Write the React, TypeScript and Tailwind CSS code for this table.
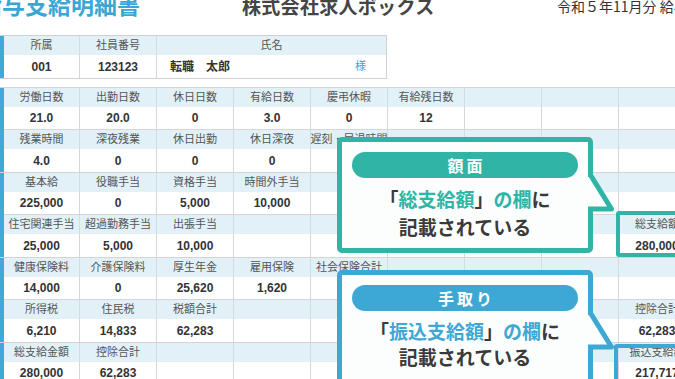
import React from "react";

const FONT = "font-['Liberation_Sans','Noto_Sans_CJK_JP',sans-serif]";

const E = ["", "", "", "", "", "", "", "", ""];

const sections: string[][][] = [
  [
    ["労働日数", "出勤日数", "休日日数", "有給日数", "慶弔休暇", "有給残日数", "", "", ""],
    ["21.0", "20.0", "0", "3.0", "0", "12", "", "", ""],
    ["残業時間", "深夜残業", "休日出勤", "休日深夜", "遅刻・早退時間", "", "", "", ""],
    ["4.0", "0", "0", "0", "", "", "", "", ""],
  ],
  [
    ["基本給", "役職手当", "資格手当", "時間外手当", "", "", "", "", ""],
    ["225,000", "0", "5,000", "10,000", "", "", "", "", ""],
    ["住宅関連手当", "超過勤務手当", "出張手当", "", "", "", "", "", "総支給額"],
    ["25,000", "5,000", "10,000", "", "", "", "", "", "280,000"],
  ],
  [
    ["健康保険料", "介護保険料", "厚生年金", "雇用保険", "社会保険合計", "", "", "", ""],
    ["14,000", "0", "25,620", "1,620", "", "", "", "", ""],
    ["所得税", "住民税", "税額合計", "", "", "", "", "", "控除合計"],
    ["6,210", "14,833", "62,283", "", "", "", "", "", "62,283"],
  ],
  [
    ["総支給金額", "控除合計", "", "", "", "", "", "", "振込支給額"],
    ["280,000", "62,283", "", "", "", "", "", "", "217,717"],
    E,
    E,
  ],
];

function Section({ rows }: { rows: string[][] }) {
  return (
    <div className="flex border-t border-[#d4d4d4]">
      <div className="w-[4px] shrink-0 bg-[#40a9d5]" />
      <div className="grid shrink-0 grid-cols-[76px_repeat(8,77px)] grid-rows-[19px_23px_19px_23px]">
        {rows.map((row, ri) =>
          row.map((txt, ci) =>
            ri % 2 === 0 ? (
              <div
                key={`${ri}-${ci}`}
                className="flex items-center justify-center whitespace-nowrap bg-[#e2f1f8] border-r border-[#d6dde0] text-[11px] leading-none text-[#555]"
              >
                {txt}
              </div>
            ) : (
              <div
                key={`${ri}-${ci}`}
                className={`flex items-center justify-center whitespace-nowrap bg-white border-r border-[#d6d6d6] text-[12px] font-bold leading-none text-[#333] ${
                  ri === 1 ? "border-b" : ""
                }`}
              >
                {txt}
              </div>
            )
          )
        )}
      </div>
    </div>
  );
}

function Tail({ color, top }: { color: string; top: number }) {
  return (
    <svg
      className="absolute"
      style={{ left: 251, top }}
      width="32"
      height="42"
      viewBox="0 0 32 42"
    >
      <polygon points="0,2 2.5,2 23.5,34 0,34" fill="#fcfefe" />
      <polyline
        points="2.5,0 23.5,34 0,34"
        fill="none"
        stroke={color}
        strokeWidth="5"
        strokeLinejoin="round"
        strokeLinecap="square"
      />
    </svg>
  );
}

export default function App() {
  return (
    <div className={`relative w-[675px] h-[379px] overflow-hidden bg-white ${FONT}`}>
      {/* header */}
      <div className="flex h-[35px] items-start whitespace-nowrap">
        <div className="ml-[-21px] w-[263px] shrink-0 mt-[-7px] text-[23px] leading-[23px] font-bold text-[#3aa6d3] font-['Noto_Sans_CJK_JP',sans-serif]">
          給与支給明細書
        </div>
        <div className="w-[315px] shrink-0 mt-[-4px] text-[19px] leading-[19px] font-bold tracking-[0.3px] text-[#444] font-['Noto_Sans_CJK_JP',sans-serif]">
          株式会社求人ボックス
        </div>
        <div className="shrink-0 mt-[-1px] text-[14px] leading-[14px] text-[#333] font-['Noto_Sans_CJK_JP',sans-serif]">
          令和５年11月分 給与支給明細書
        </div>
      </div>

      {/* info table */}
      <div className="flex w-[387px] border-y border-r border-[#d0d0d0]">
        <div className="w-[4px] shrink-0 bg-[#40a9d5]" />
        <div className="grid grid-cols-[76px_77px_229px] grid-rows-[19px_23px]">
          <div className="flex items-center justify-center bg-[#e2f1f8] border-r border-[#d6dde0] text-[11px] text-[#555]">所属</div>
          <div className="flex items-center justify-center bg-[#e2f1f8] border-r border-[#d6dde0] text-[11px] text-[#555]">社員番号</div>
          <div className="flex items-center justify-center bg-[#e2f1f8] text-[11px] text-[#555]">氏名</div>
          <div className="flex items-center justify-center border-r border-[#d6d6d6] text-[12px] font-bold text-[#333]">001</div>
          <div className="flex items-center justify-center border-r border-[#d6d6d6] text-[12px] font-bold text-[#333]">123123</div>
          <div className="flex items-center justify-between pl-[13px] pr-[20px]">
            <span className="text-[12px] font-bold text-[#333]">転職　太郎</span>
            <span className="text-[11px] text-[#3aa6d3]">様</span>
          </div>
        </div>
      </div>

      {/* main table */}
      <div className="mt-[8px] flex flex-col">
        {sections.map((s, i) => (
          <Section key={i} rows={s} />
        ))}
      </div>

      {/* highlight boxes */}
      <div className="absolute left-[616px] top-[211px] w-[80px] h-[46px] border-[4px] border-[#2fb4a6] rounded-[3px]" />
      <div className="absolute left-[614px] top-[344px] w-[80px] h-[60px] border-[4px] border-[#3ea8d4] rounded-[3px]" />

      {/* teal callout */}
      <div className="absolute left-[337px] top-[137px] w-[256px] h-[116px]">
        <div className="h-full w-full rounded-[5px] border-[5px] border-[#2fb4a6] bg-[#fcfefe] px-[10px] pt-[10px] flex flex-col items-center">
          <div className="w-full h-[26px] rounded-full bg-[#2fb4a6] flex items-center justify-center text-white text-[16px] font-bold tracking-[3px] pl-[3px] font-['Noto_Sans_CJK_JP',sans-serif]">
            額面
          </div>
          <div className="mt-[7px] text-[19px] leading-[28px] font-bold text-[#3a3a3a] text-center font-['Noto_Sans_CJK_JP',sans-serif]">
            <div>
              「<span className="text-[#2fb4a6]">総支給額</span>」<span className="text-[#2fb4a6]">の欄</span>に
            </div>
            <div>記載されている</div>
          </div>
        </div>
        <Tail color="#2fb4a6" top={38} />
      </div>

      {/* blue callout */}
      <div className="absolute left-[337px] top-[270px] w-[256px] h-[130px]">
        <div className="h-full w-full rounded-[5px] border-[5px] border-[#3ea8d4] bg-[#fcfefe] px-[10px] pt-[10px] flex flex-col items-center">
          <div className="w-full h-[26px] rounded-full bg-[#3ea8d4] flex items-center justify-center text-white text-[16px] font-bold tracking-[3px] pl-[3px] font-['Noto_Sans_CJK_JP',sans-serif]">
            手取り
          </div>
          <div className="mt-[7px] text-[19px] leading-[26px] font-bold text-[#3a3a3a] text-center font-['Noto_Sans_CJK_JP',sans-serif]">
            <div>
              「<span className="text-[#3ea8d4]">振込支給額</span>」<span className="text-[#3ea8d4]">の欄</span>に
            </div>
            <div>記載されている</div>
          </div>
        </div>
        <Tail color="#3ea8d4" top={43} />
      </div>
    </div>
  );
}
